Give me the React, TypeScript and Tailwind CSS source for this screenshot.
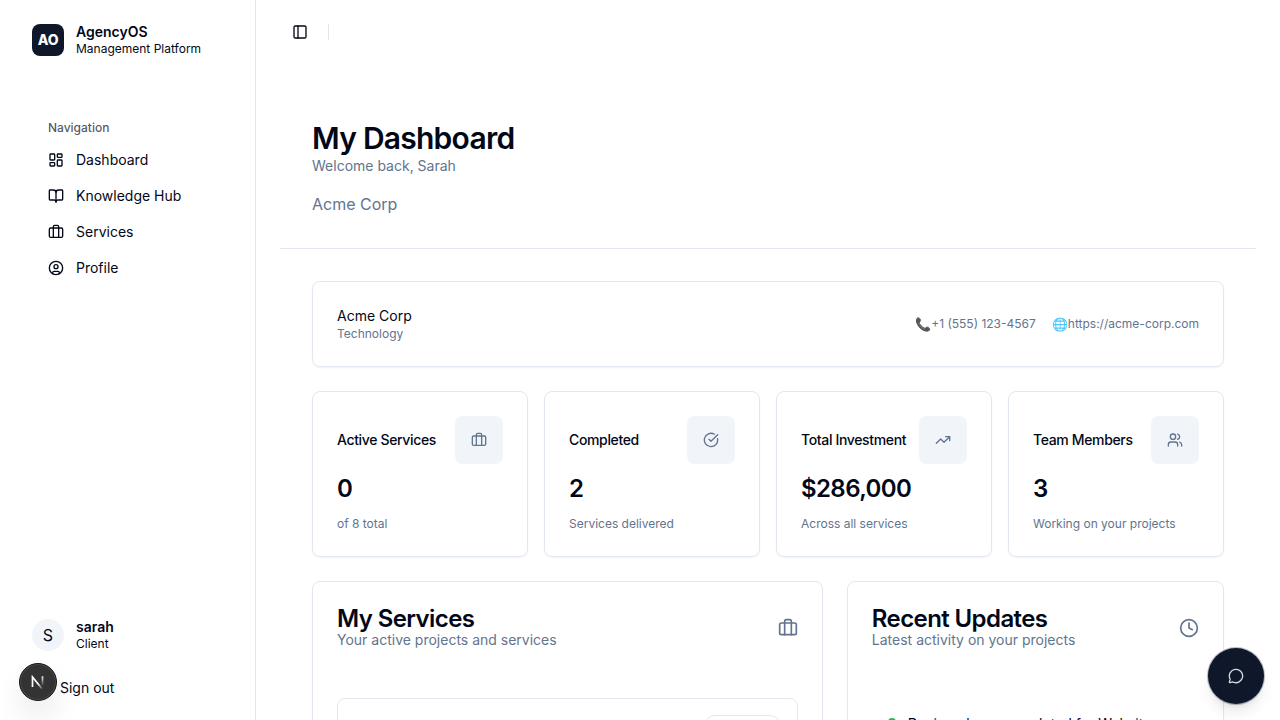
import React from "react";
import {
  BookOpen,
  Briefcase,
  CircleCheckBig,
  CircleUser,
  Clock,
  LayoutDashboard,
  MessageCircle,
  PanelLeft,
  TrendingUp,
  Users,
  type LucideIcon,
} from "lucide-react";

const navItems: { label: string; icon: LucideIcon }[] = [
  { label: "Dashboard", icon: LayoutDashboard },
  { label: "Knowledge Hub", icon: BookOpen },
  { label: "Services", icon: Briefcase },
  { label: "Profile", icon: CircleUser },
];

const stats: { title: string; value: string; note: string; icon: LucideIcon }[] = [
  { title: "Active Services", value: "0", note: "of 8 total", icon: Briefcase },
  { title: "Completed", value: "2", note: "Services delivered", icon: CircleCheckBig },
  { title: "Total Investment", value: "$286,000", note: "Across all services", icon: TrendingUp },
  { title: "Team Members", value: "3", note: "Working on your projects", icon: Users },
];

function Sidebar() {
  return (
    <aside className="flex w-64 shrink-0 flex-col border-r border-slate-200">
      <div className="flex h-14 items-start gap-3 px-8 pt-6">
        <div className="flex size-8 shrink-0 items-center justify-center rounded-lg bg-slate-900 text-sm font-extrabold tracking-[-0.3px] text-slate-50">
          AO
        </div>
        <div>
          <div className="text-sm leading-4 font-semibold">AgencyOS</div>
          <div className="mt-px text-xs leading-4">Management Platform</div>
        </div>
      </div>
      <nav className="flex flex-col px-12 pt-14">
        <div className="flex h-8 items-center text-xs font-medium text-[#020817]/70">Navigation</div>
        <ul className="flex flex-col gap-1">
          {navItems.map(({ label, icon: Icon }) => (
            <li key={label} className="flex h-8 items-center gap-3 text-sm">
              <Icon className="size-4" />
              {label}
            </li>
          ))}
        </ul>
      </nav>
      <div className="mt-auto flex flex-col pb-4">
        <div className="flex h-8 items-start gap-3 px-8">
          <div className="flex size-8 items-center justify-center rounded-full bg-slate-100 text-base">S</div>
          <div>
            <div className="text-sm leading-4 font-semibold">sarah</div>
            <div className="mt-px text-xs leading-4">Client</div>
          </div>
        </div>
        <div className="mt-[21px] flex h-8 items-center pl-15 text-sm">Sign out</div>
      </div>
    </aside>
  );
}

function SectionHeader({ title, subtitle, icon: Icon }: { title: string; subtitle: string; icon: LucideIcon }) {
  return (
    <div className="flex items-center justify-between">
      <div>
        <h2 className="pt-px text-2xl leading-[23px] font-semibold tracking-tight">{title}</h2>
        <p className="text-sm text-slate-500">{subtitle}</p>
      </div>
      <Icon className="size-5 text-slate-500" />
    </div>
  );
}

export default function App() {
  return (
    <div className="relative flex h-screen w-full overflow-hidden bg-white font-['Inter',sans-serif] text-[#020817]">
      <Sidebar />
      <div className="flex min-w-0 flex-1 flex-col">
        <header className="flex h-16 shrink-0 items-center gap-5 px-9">
          <PanelLeft className="size-4" />
          <div className="h-4 w-px bg-slate-200" />
        </header>
        <main className="min-h-0 flex-1 overflow-hidden p-6">
          <div className="border-b border-slate-200 p-8">
            <h1 className="text-3xl leading-9 font-semibold tracking-tight">My Dashboard</h1>
            <p className="text-sm text-slate-500">Welcome back, Sarah</p>
            <p className="mt-4 text-base text-slate-500">Acme Corp</p>
          </div>
          <div className="flex flex-col gap-6 p-8">
            <section className="flex items-center justify-between rounded-lg border border-slate-200 p-6 shadow-xs">
              <div>
                <div className="text-sm">Acme Corp</div>
                <div className="text-xs text-slate-500">Technology</div>
              </div>
              <div className="flex items-center gap-4 text-xs text-slate-500">
                <div className="flex items-center">
                  <span className="w-4 text-[13px] leading-4 opacity-90">📞</span>
                  <span>+1 (555) 123-4567</span>
                </div>
                <div className="flex items-center">
                  <span className="w-4 text-[13px] leading-4 opacity-70">🌐</span>
                  <span>https://acme-corp.com</span>
                </div>
              </div>
            </section>
            <section className="grid grid-cols-4 gap-4">
              {stats.map(({ title, value, note, icon: Icon }) => (
                <div key={title} className="rounded-lg border border-slate-200 p-6 shadow-xs">
                  <div className="flex items-center justify-between">
                    <div className="text-sm font-medium tracking-tight">{title}</div>
                    <div className="flex size-12 items-center justify-center rounded-lg bg-slate-100">
                      <Icon className="size-4 text-slate-500" />
                    </div>
                  </div>
                  <div className="mt-[9px] text-2xl leading-8 font-semibold tracking-tight">{value}</div>
                  <div className="mt-[11px] text-xs text-slate-500">{note}</div>
                </div>
              ))}
            </section>
            <section className="grid grid-cols-7 gap-6">
              <div className="col-span-4 h-80 rounded-lg border border-slate-200 p-6 shadow-xs">
                <SectionHeader title="My Services" subtitle="Your active projects and services" icon={Briefcase} />
                <div className="mt-12 flex h-32 justify-end rounded-lg border border-slate-200 p-4">
                  <div className="h-[22px] w-[77px] rounded-full border border-slate-200" />
                </div>
              </div>
              <div className="col-span-3 h-80 rounded-lg border border-slate-200 p-6 shadow-xs">
                <SectionHeader title="Recent Updates" subtitle="Latest activity on your projects" icon={Clock} />
                <div className="mt-16 flex gap-3 px-4">
                  <div className="mt-1 size-2 shrink-0 rounded-full bg-green-500" />
                  <div className="text-sm">Design phase completed for Website</div>
                </div>
              </div>
            </section>
          </div>
        </main>
      </div>
      <div className="absolute top-[663px] left-[19px] flex size-[38px] items-center justify-center rounded-full border border-[#171717] bg-[#333] shadow-[inset_0_0_0_1px_#4a4a4a,0_16px_32px_-8px_rgba(0,0,0,0.24)]">
        <svg width="14" height="14" viewBox="0 0 14 14" fill="none" strokeWidth="1.7">
          <defs>
            <linearGradient id="diagonal" x1="8" y1="8" x2="12.5" y2="14" gradientUnits="userSpaceOnUse">
              <stop stopColor="white" />
              <stop offset="1" stopColor="white" stopOpacity="0" />
            </linearGradient>
            <linearGradient id="stem" x1="11.5" y1="1" x2="11.5" y2="11" gradientUnits="userSpaceOnUse">
              <stop stopColor="white" />
              <stop offset="1" stopColor="white" stopOpacity="0" />
            </linearGradient>
          </defs>
          <path d="M1.5 12V2l9.7 12" stroke="url(#diagonal)" />
          <path d="M11.5 1.3V11" stroke="url(#stem)" />
        </svg>
      </div>
      <div className="absolute top-[648px] left-[1208px] flex size-14 items-center justify-center rounded-full bg-slate-900 text-slate-50 shadow-lg ring-1 ring-slate-900/30">
        <MessageCircle className="size-4 opacity-85" />
      </div>
    </div>
  );
}
